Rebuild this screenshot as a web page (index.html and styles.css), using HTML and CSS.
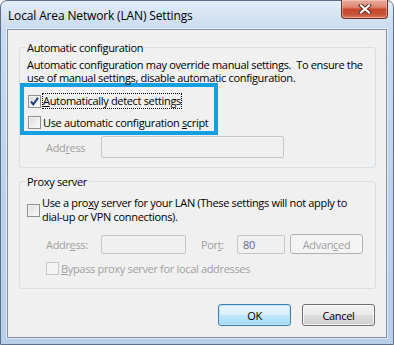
FILE: index.html
```html
<!DOCTYPE html>
<html lang="en">
  <head>
    <meta charset="UTF-8" />
    <title>Local Area Network (LAN) Settings</title>
    <link rel="stylesheet" href="styles.css">
  </head>
  <body>
    <div class="window">
      <div class="titlebar">
        <span class="title">Local Area Network (LAN) Settings</span>
        <span class="close">
          <svg width="16" height="10" viewBox="0 0 16 10">
            <path d="M4 1.5 L12 8.5 M12 1.5 L4 8.5" stroke="#5a2418" stroke-width="4" stroke-linecap="square"/>
            <path d="M4 1.5 L12 8.5 M12 1.5 L4 8.5" stroke="#fff" stroke-width="2.2" stroke-linecap="square"/>
          </svg>
        </span>
      </div>
      <div class="client">
        <fieldset class="group first">
          <legend>Automatic configuration</legend>
          <p class="info">Automatic configuration may override manual settings.&nbsp; To ensure the<br>use of manual settings, disable automatic configuration.</p>
          <div class="highlight">
            <div class="row">
              <span class="check checked">
                <svg width="11" height="11" viewBox="0 0 11 11"><path d="M2 5.5 L4.3 8.3 L9 1.8" fill="none" stroke="#253f7a" stroke-width="2"/></svg>
              </span>
              <span class="focus"><u>A</u>utomatically detect settings</span>
            </div>
            <div class="row">
              <span class="check"></span>
              <span class="text">Use automatic configuration <u>s</u>cript</span>
            </div>
          </div>
          <div class="field-row">
            <span class="label disabled">Add<u>r</u>ess</span>
            <span class="input tall"></span>
          </div>
        </fieldset>

        <fieldset class="group second">
          <legend>Proxy server</legend>
          <div class="row proxy">
            <span class="check"></span>
            <span class="text">Use a pro<u>x</u>y server for your LAN (These settings will not apply to<br>dial-up or VPN connections).</span>
          </div>
          <div class="field-row proxy-address">
            <span class="label disabled">Addr<u>e</u>ss:</span>
            <span class="input addr"></span>
            <span class="port-label disabled">Por<u>t</u>:</span>
            <span class="input port">80</span>
            <span class="button small disabled">Advan<u>c</u>ed</span>
          </div>
          <div class="row bypass">
            <span class="check off"></span>
            <span class="text disabled"><u>B</u>ypass proxy server for local addresses</span>
          </div>
        </fieldset>

        <div class="actions">
          <span class="button default">OK</span>
          <span class="button">Cancel</span>
        </div>
      </div>
    </div>
  </body>
</html>
```

FILE: styles.css
```css
body {
  margin: 0;
  font-family: "Open Sans", "Noto Sans", sans-serif;
  font-size: 11px;
  letter-spacing: -0.33px;
  color: #000;
}

.window {
  width: 394px;
  height: 345px;
  box-sizing: border-box;
  border: 1px solid #5d7089;
  border-radius: 7px 7px 0 0;
  background: linear-gradient(#e3edf8, #c9dbef 28px, #bdd2ea 60%, #b9cfe9);
  padding: 0 6px 6px;
  display: flex;
  flex-direction: column;
}

.titlebar {
  height: 28px;
  display: flex;
  justify-content: space-between;
  align-items: flex-start;
}
.title {
  font-size: 12px;
  letter-spacing: -0.15px;
  padding: 6px 0 0 1px;
}
.close {
  width: 45px;
  height: 18px;
  margin: -1px -1px 0 0;
  border: 1px solid #6e3126;
  border-top: none;
  border-radius: 0 0 4px 4px;
  background: linear-gradient(#e8ab9c, #dc8670 40%, #c8472a 52%, #c9533a 80%, #d67a5e);
  box-shadow: inset 0 0 0 1px rgba(255, 220, 210, 0.45);
  display: flex;
  justify-content: center;
  align-items: center;
}

.client {
  flex: 1;
  background: #f0f0f0;
  border: 1px solid #7e90a6;
  box-shadow: 0 0 0 1px rgba(255, 255, 255, 0.55);
  display: flex;
  flex-direction: column;
}

.group {
  margin: 0 10px 0 11px;
  border: 1px solid #d5dfe5;
  border-radius: 3px;
  padding: 0 8px 0 7px;
  min-width: 0;
}
.group legend {
  padding: 0 2px;
  margin-left: -2px;
  line-height: 15px;
}
.first {
  margin-top: 10px;
  padding-bottom: 9px;
}
.second {
  margin-top: 6px;
  padding-bottom: 12px;
}

.info {
  margin: 3px 0 0;
  line-height: 13px;
  white-space: nowrap;
}

.highlight {
  width: 198px;
  box-sizing: border-box;
  margin: -1px 0 0 -7px;
  border: 4px solid #12a0e0;
  padding: 5px 4px 0;
  display: flex;
  flex-direction: column;
  gap: 3px;
}

.row {
  display: flex;
  align-items: center;
  height: 18px;
  white-space: nowrap;
}
.row .text {
  margin-left: 2px;
}
.focus {
  margin-left: 2px;
  outline: 1px dotted #000;
  line-height: 14px;
}

.check {
  width: 13px;
  height: 13px;
  box-sizing: border-box;
  border: 1px solid #8e8f8f;
  background: linear-gradient(135deg, #d6d8dc, #f6f6f6 80%);
  box-shadow: inset 0 0 0 1px #f4f4f4;
  display: flex;
  justify-content: center;
  align-items: center;
  flex: none;
}
.check.off {
  border-color: #c6c6c6;
  background: #f4f4f4;
}

.field-row {
  display: flex;
  align-items: center;
  margin-top: 1px;
  white-space: nowrap;
}
.label {
  margin-left: 19px;
  width: 55px;
}
.disabled {
  color: #a0a0a0;
}
.input {
  box-sizing: border-box;
  border: 1px solid #c2c7cc;
  border-radius: 2px;
  background: #f0f0f0;
  height: 19px;
  padding: 0 5px;
  line-height: 17px;
  color: #6d6d6d;
}
.input.tall {
  width: 183px;
  height: 22px;
}

.proxy {
  height: auto;
  margin-top: 7px;
  line-height: 14px;
}
.proxy-address {
  margin-top: 10px;
}
.input.addr {
  width: 85px;
}
.port-label {
  margin-left: 15px;
  width: 36px;
}
.input.port {
  width: 48px;
}
.bypass {
  margin: 6px 0 0 19px;
  height: 16px;
}

.button {
  box-sizing: border-box;
  width: 73px;
  height: 22px;
  border: 1px solid #707070;
  border-radius: 3px;
  background: linear-gradient(#f2f2f2, #ebebeb 48%, #dddddd 52%, #cfcfcf);
  box-shadow: inset 0 0 0 1px rgba(255, 255, 255, 0.7);
  display: flex;
  justify-content: center;
  align-items: center;
}
.button.small {
  height: 20px;
  margin-left: 5px;
  border-color: #adb2b5;
  background: #f4f4f4;
  box-shadow: none;
}
.button.default {
  border-color: #3c7fb1;
  background: linear-gradient(#eaf6fd, #d9f0fc 48%, #bee6fd 52%, #a7d9f5);
  box-shadow: inset 0 0 0 1px #c2e4f6;
}

.actions {
  display: flex;
  justify-content: flex-end;
  gap: 11px;
  margin: 15px 11px 0 0;
}
```
